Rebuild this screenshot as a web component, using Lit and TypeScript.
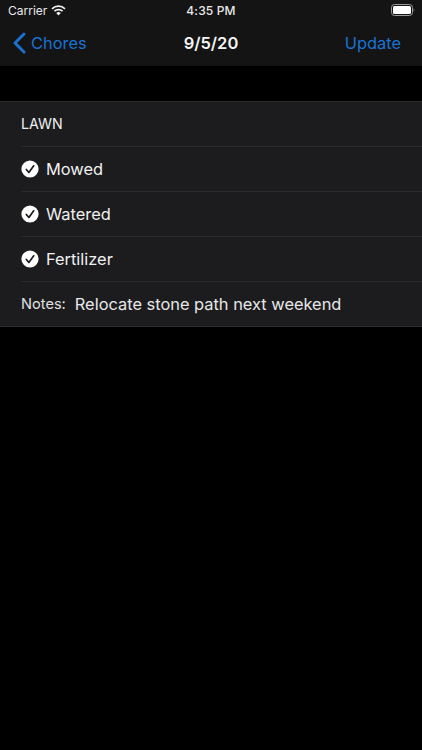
import { LitElement, html, css } from "lit";
import { customElement } from "lit/decorators.js";

const check = html`<svg class="check" viewBox="0 0 18 18" width="18" height="18" aria-hidden="true">
  <circle cx="9" cy="9" r="8.6" fill="#fff"></circle>
  <path d="M5.3 9.5 L7.9 12.4 L12.7 5.8" fill="none" stroke="#1c1c1e" stroke-width="1.7" stroke-linecap="round" stroke-linejoin="round"></path>
</svg>`;

@customElement("app-root")
export class AppRoot extends LitElement {
  static styles = css`
    :host {
      display: block;
      width: 422px;
      height: 750px;
      background: #000;
      overflow: hidden;
      font-family: Inter, "Liberation Sans", Arial, sans-serif;
      color: #fff;
    }
    .top {
      background: #141414;
      height: 66px;
      display: flex;
      flex-direction: column;
    }
    .status {
      height: 20px;
      display: grid;
      grid-template-columns: 1fr auto 1fr;
      align-items: center;
      padding: 0 7px 0 8px;
      font-size: 12px;
      font-weight: 400;
      color: #e8e8e8;
    }
    .status-left {
      display: flex;
      align-items: center;
      gap: 4px;
    }
    .time {
      font-weight: 500;
      font-size: 12px;
      letter-spacing: 0.15px;
      margin-left: -1px;
    }
    .status-right {
      display: flex;
      justify-content: flex-end;
      align-items: center;
    }
    .nav {
      height: 46px;
      display: grid;
      grid-template-columns: 1fr auto 1fr;
      align-items: center;
      padding: 0 21px;
      font-size: 16.4px;
    }
    .back {
      display: flex;
      align-items: center;
      gap: 5px;
      margin-left: -8px;
      color: #1a72d3;
    }
    .title {
      font-weight: 600;
      font-size: 16.5px;
      color: #f4f4f4;
    }
    .update {
      justify-self: end;
      color: #1a72d3;
    }
    .card {
      margin-top: 35px;
      background: #1c1c1e;
      border-top: 1px solid #2a2a2c;
      border-bottom: 1px solid #2a2a2c;
      padding-left: 21px;
    }
    .row {
      height: 44px;
      display: flex;
      align-items: center;
      border-top: 1px solid #2a2a2c;
      font-size: 16.4px;
      color: #f0f0f0;
      gap: 7.5px;
    }
    .row.head {
      border-top: none;
      font-size: 14.2px;
      color: #f0f0f0;
      padding-bottom: 1px;
      height: 43px;
    }
    .check {
      flex: none;
      margin-left: -0.5px;
    }
    .notes {
      font-size: 14.6px;
      color: #e0e0e0;
      margin-right: 1.5px;
    }
    .note-text {
      font-size: 16.4px;
      color: #e8e8e8;
    }
  `;

  render() {
    return html`
      <div class="top">
        <div class="status">
          <div class="status-left">
            <span>Carrier</span>
            <svg width="15" height="11" viewBox="0 0 15 11" aria-hidden="true">
              <path d="M1 3.8 A9.4 9.4 0 0 1 14 3.8 M3.4 6.2 A6 6 0 0 1 11.6 6.2" fill="none" stroke="#f0f0f0" stroke-width="1.7"></path>
              <path d="M5.2 8.1 A3.4 3.4 0 0 1 9.8 8.1 L7.5 10.6 Z" fill="#f0f0f0"></path>
            </svg>
          </div>
          <span class="time">4:35 PM</span>
          <div class="status-right">
            <svg width="24" height="12" viewBox="0 0 24 12" aria-hidden="true">
              <rect x="0.5" y="0.5" width="21" height="11" rx="3" fill="none" stroke="#9a9a9a"></rect>
              <rect x="2" y="2" width="18" height="8" rx="1.5" fill="#fff"></rect>
              <path d="M22.7 4.2 C23.5 4.5 23.5 7.5 22.7 7.8 Z" fill="#9a9a9a"></path>
            </svg>
          </div>
        </div>
        <div class="nav">
          <div class="back">
            <svg width="13" height="22" viewBox="0 0 13 22" aria-hidden="true">
              <path d="M11 2 L2 11 L11 20" fill="none" stroke="#1a72d3" stroke-width="2.9" stroke-linecap="round" stroke-linejoin="round"></path>
            </svg>
            <span>Chores</span>
          </div>
          <div class="title">9/5/20</div>
          <div class="update">Update</div>
        </div>
      </div>
      <div class="card">
        <div class="row head">LAWN</div>
        <div class="row">${check}<span>Mowed</span></div>
        <div class="row">${check}<span>Watered</span></div>
        <div class="row">${check}<span>Fertilizer</span></div>
        <div class="row"><span class="notes">Notes:</span><span class="note-text">Relocate stone path next weekend</span></div>
      </div>
    `;
  }
}
